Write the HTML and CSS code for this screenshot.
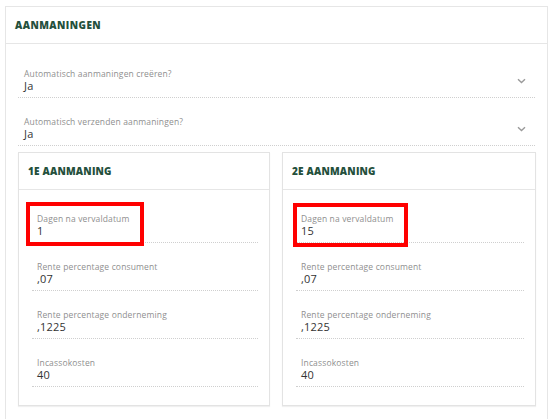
FILE: index.html
```html
<!DOCTYPE html>
<html lang="nl">
<head>
<meta charset="utf-8">
<link rel="stylesheet" href="styles.css">
</head>
<body>
<section class="panel">
  <header class="panel-head"><h2 class="title">AANMANINGEN</h2></header>
  <div class="panel-body">
    <div class="field select">
      <div class="label">Automatisch aanmaningen creëren?</div>
      <div class="value">Ja</div>
      <svg class="chev" width="9" height="6" viewBox="0 0 9 6"><path d="M1 1.2 L4.5 4.5 L8 1.2" fill="none" stroke="#9a9a9a" stroke-width="1.4"/></svg>
    </div>
    <div class="field select">
      <div class="label">Automatisch verzenden aanmaningen?</div>
      <div class="value">Ja</div>
      <svg class="chev" width="9" height="6" viewBox="0 0 9 6"><path d="M1 1.2 L4.5 4.5 L8 1.2" fill="none" stroke="#9a9a9a" stroke-width="1.4"/></svg>
    </div>
    <div class="cards">
      <div class="card">
        <header class="card-head"><h3 class="title card-title">1E AANMANING</h3></header>
        <div class="card-body">
          <div class="field">
            <div class="label">Dagen na vervaldatum</div>
            <div class="value">1</div>
            <span class="mark mark-a"></span>
          </div>
          <div class="field">
            <div class="label">Rente percentage consument</div>
            <div class="value">,07</div>
          </div>
          <div class="field">
            <div class="label">Rente percentage onderneming</div>
            <div class="value">,1225</div>
          </div>
          <div class="field">
            <div class="label">Incassokosten</div>
            <div class="value">40</div>
          </div>
        </div>
      </div>
      <div class="card">
        <header class="card-head"><h3 class="title card-title">2E AANMANING</h3></header>
        <div class="card-body">
          <div class="field">
            <div class="label">Dagen na vervaldatum</div>
            <div class="value">15</div>
            <span class="mark mark-b"></span>
          </div>
          <div class="field">
            <div class="label">Rente percentage consument</div>
            <div class="value">,07</div>
          </div>
          <div class="field">
            <div class="label">Rente percentage onderneming</div>
            <div class="value">,1225</div>
          </div>
          <div class="field">
            <div class="label">Incassokosten</div>
            <div class="value">40</div>
          </div>
        </div>
      </div>
    </div>
  </div>
</section>
</body>
</html>
```
FILE: styles.css
```css
* { box-sizing: border-box; }
html, body { margin: 0; padding: 0; background: #fff; }
body {
  font-family: "Open Sans", "Liberation Sans", sans-serif;
  color: #333;
  height: 419px;
  overflow: hidden;
}
.panel {
  margin: 6px 4px 0 5px;
  border: 1px solid #e6e6e6;
  border-bottom: none;
  height: 420px;
}
.panel-head {
  height: 37px;
  border-bottom: 1px solid #e6e6e6;
  display: flex;
  align-items: center;
  padding-left: 9px;
}
.title {
  margin: 0;
  font-size: 10px;
  font-weight: 800;
  color: #24503c;
  letter-spacing: 0.45px;
}
.card-title { letter-spacing: 0.2px; }
.panel-body {
  padding: 6px 12px 0 12px;
}
.field {
  position: relative;
  height: 48px;
  border-bottom: 1px dotted #cfcfcf;
  padding: 18px 0 0 6px;
}
.label {
  font-size: 8.5px;
  line-height: 11px;
  color: #8f8f8f;
  letter-spacing: 0.15px;
}
.value {
  font-size: 11px;
  line-height: 14px;
  color: #333;
  letter-spacing: 0.2px;
}
.chev {
  position: absolute;
  right: 9px;
  top: 28px;
}
.cards {
  display: grid;
  grid-template-columns: 252px 254px;
  column-gap: 12px;
  margin-top: 6px;
}
.card {
  border: 1px solid #e3e3e3;
  box-shadow: 0 1px 1px rgba(0,0,0,0.06);
}
.card-head {
  height: 37px;
  border-bottom: 1px solid #e6e6e6;
  display: flex;
  align-items: center;
  padding-left: 9px;
}
.card-body {
  padding: 5px 11px 18px 13px;
}
.card-body .field { padding-left: 5px; }
.mark {
  position: absolute;
  border: 4px solid #f00;
  top: 7px;
  height: 44px;
}
.mark-a { left: -6px; width: 118px; }
.mark-b { left: -3px; width: 115px; top: 8px; }
```
